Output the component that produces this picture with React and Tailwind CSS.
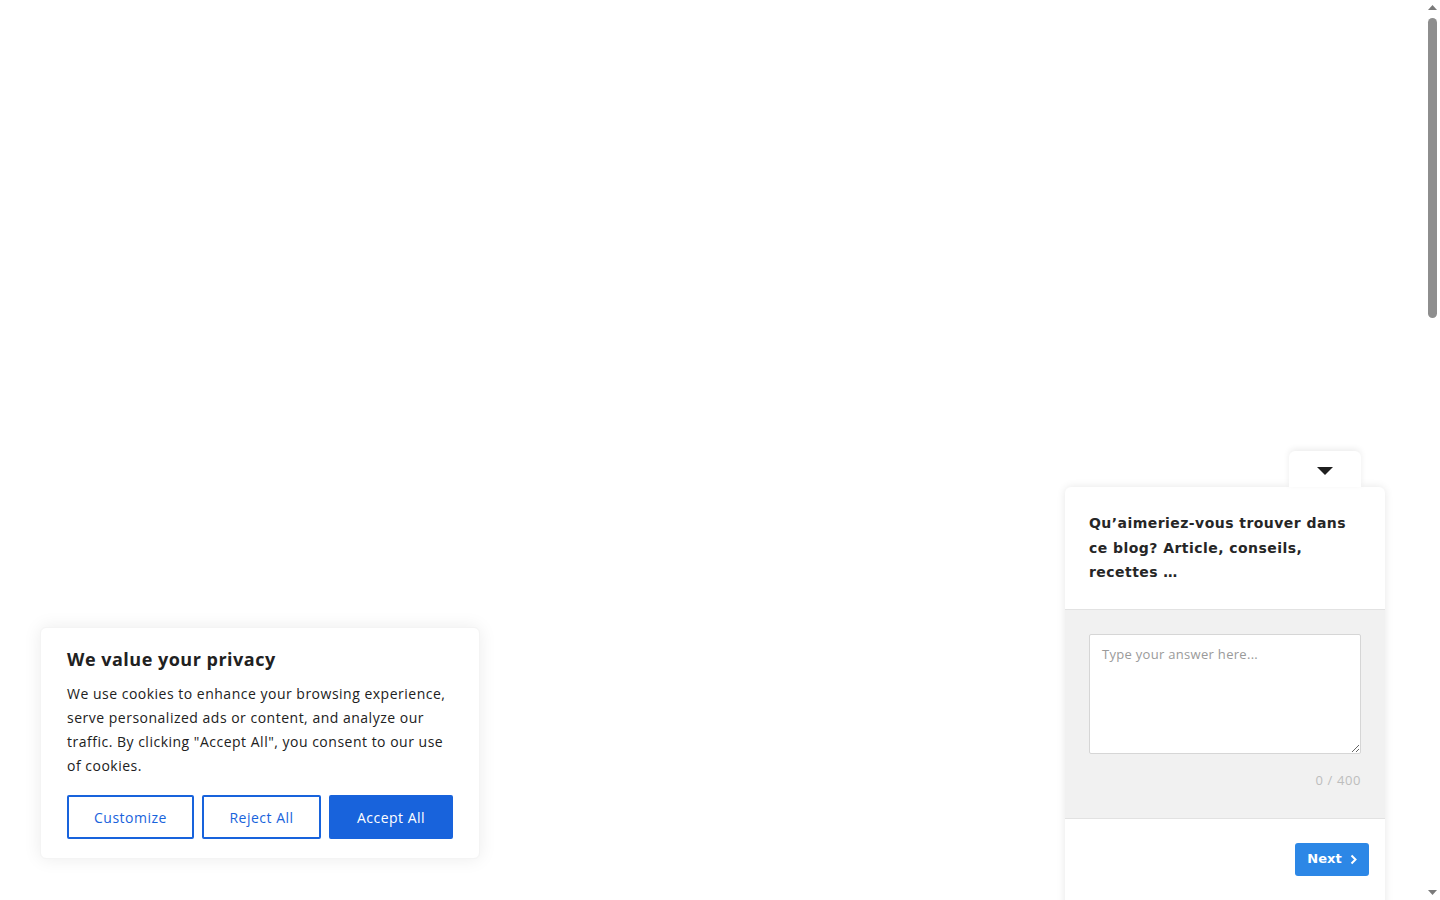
import React from "react";

export default function App() {
  return (
    <div className="flex h-screen overflow-hidden bg-white">
      <main className="relative flex-1 h-full">
        {/* Cookie banner */}
        <div className="absolute left-[40px] bottom-[41px] w-[440px] bg-white border border-[#f4f4f4] rounded-md shadow-[0_0_18px_rgba(0,0,0,0.08)] px-[26px] pt-[19px] pb-[19px] [font-family:'Open_Sans',sans-serif]">
          <h2 className="text-[18px] leading-[24px] font-bold text-[#212121] tracking-[0.5px]">We value your privacy</h2>
          <p className="mt-[11px] text-[14px] leading-[24px] text-[#212121] tracking-[0.5px]">
            We use cookies to enhance your browsing experience, serve personalized ads or content, and analyze our traffic. By clicking "Accept All", you consent to our use of cookies.
          </p>
          <div className="mt-[17px] flex gap-[8px]">
            <button className="w-[127px] h-[44px] border-2 border-[#1863dc] rounded-[2px] text-[14px] tracking-[0.5px] text-[#1863dc] bg-white">Customize</button>
            <button className="w-[119px] h-[44px] border-2 border-[#1863dc] rounded-[2px] text-[14px] tracking-[0.5px] text-[#1863dc] bg-white">Reject All</button>
            <button className="w-[124px] h-[44px] border-2 border-[#1863dc] rounded-[2px] text-[14px] tracking-[0.5px] text-white bg-[#1863dc]">Accept All</button>
          </div>
        </div>

        {/* Survey widget */}
        <div className="absolute top-[451px] right-[40px] w-[320px] flex flex-col items-end">
          <div className="mr-[24px] w-[72px] h-[36px] bg-white rounded-t-md shadow-[0_-2px_6px_rgba(0,0,0,0.08)] flex items-center justify-center relative z-10">
            <svg width="18" height="10" viewBox="0 0 18 10" className="mt-[3px]">
              <path d="M1 1 L17 1 L9 9 Z" fill="#1f1f1f" />
            </svg>
          </div>
          <div className="w-[320px] bg-white rounded-t-md shadow-[0_0_8px_rgba(0,0,0,0.1)] [font-family:'DejaVu_Sans',sans-serif]">
            <div className="px-[24px] pt-[24px] pb-[24px] border-b border-[#e2e2e2]">
              <p className="text-[14px] leading-[24.5px] font-bold text-[#262626] tracking-[0.45px]">
                Qu’aimeriez-vous trouver dans ce blog? Article, conseils, recettes …
              </p>
            </div>
            <div className="bg-[#f1f1f1] px-[24px] pt-[24px] pb-[30px] border-b border-[#e2e2e2]">
              <textarea
                placeholder="Type your answer here..."
                className="block w-[272px] h-[120px] bg-white border border-[#d6d6d6] rounded-[2px] px-[12px] py-[10px] text-[13px] leading-[18px] tracking-[0.3px] placeholder:text-[#9a9a9a] [font-family:'Open_Sans',sans-serif] outline-none resize-y"
              />
              <div className="mt-[18px] text-right text-[13px] leading-[16px] tracking-[0.6px] text-[#bdbdbd] [font-family:'Open_Sans',sans-serif]">0 / 400</div>
            </div>
            <div className="h-[120px] px-[16px] pt-[24px] flex justify-end items-start">
              <button className="h-[33px] w-[74px] rounded-[3px] bg-[#2c87e6] text-white text-[13px] font-bold flex items-center justify-center gap-[8px]">
                Next
                <svg width="7" height="11" viewBox="0 0 7 11">
                  <path d="M1.5 1.5 L5.5 5.5 L1.5 9.5" stroke="#fff" strokeWidth="2" fill="none" />
                </svg>
              </button>
            </div>
          </div>
        </div>
      </main>

      {/* Scrollbar */}
      <aside className="w-[15px] h-full flex flex-col items-center bg-white">
        <div className="h-[15px] flex items-center justify-center">
          <svg width="9" height="5" viewBox="0 0 9 5"><path d="M0 5 L4.5 0 L9 5 Z" fill="#7a7a7a" /></svg>
        </div>
        <div className="mt-[3px] w-[9px] h-[300px] rounded-full bg-[#8e8e8e]" />
        <div className="flex-1" />
        <div className="h-[15px] flex items-center justify-center">
          <svg width="9" height="5" viewBox="0 0 9 5"><path d="M0 0 L9 0 L4.5 5 Z" fill="#7a7a7a" /></svg>
        </div>
      </aside>
    </div>
  );
}
